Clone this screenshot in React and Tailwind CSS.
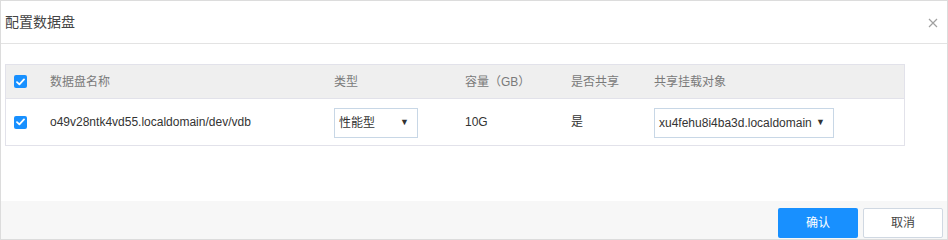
import React from "react";

const font = { fontFamily: '"Liberation Sans", "Noto Sans CJK SC", Arial, sans-serif' };

function Check() {
  return (
    <div className="w-[13px] h-[13px] rounded-[2px] bg-[#1890ff] flex items-center justify-center">
      <svg width="9" height="8" viewBox="0 0 9 8">
        <path d="M1 4.2 L3.4 6.4 L8 1.4" fill="none" stroke="#fff" strokeWidth="1.8" strokeLinecap="round" strokeLinejoin="round" />
      </svg>
    </div>
  );
}

function Select({ value, width }) {
  return (
    <div className={`h-[30px] border border-[#c8d7e6] bg-white flex items-center justify-between pl-[4px] pr-[8px] text-[12px] text-[#333] ${width}`}>
      <span>{value}</span>
      <span className="text-[9px] text-[#333]">▼</span>
    </div>
  );
}

export default function App() {
  const cols = "grid grid-cols-[44px_284px_131px_106px_83px_1fr] items-center";
  return (
    <div className="w-[948px] h-[240px] border border-[#dcdcdc] bg-white flex flex-col" style={font}>
      <div className="h-[43px] border-b border-[#e3e3e3] flex items-center justify-between pl-[4px] pr-[9px]">
        <span className="text-[14px] text-[#444]">配置数据盘</span>
        <svg width="10" height="10" viewBox="0 0 10 10" className="mt-[2px]">
          <path d="M1 1 L9 9 M9 1 L1 9" stroke="#a0a0a0" strokeWidth="1.2" />
        </svg>
      </div>
      <div className="h-[157px] pt-[20px] pl-[4px]">
        <div className="w-[900px] border border-[#e2e2ea] text-[12px]">
          <div className={`${cols} h-[34px] bg-[#efefef] border-b border-[#e2e2ea] text-[#7a7a7a]`}>
            <div className="pl-[8px]"><Check /></div>
            <div>数据盘名称</div>
            <div>类型</div>
            <div>容量（GB）</div>
            <div>是否共享</div>
            <div>共享挂载对象</div>
          </div>
          <div className={`${cols} h-[46px] text-[#333]`}>
            <div className="pl-[8px]"><Check /></div>
            <div>o49v28ntk4vd55.localdomain/dev/vdb</div>
            <div className="pt-[2px]"><Select value="性能型" width="w-[84px]" /></div>
            <div>10G</div>
            <div>是</div>
            <div className="pt-[2px]"><Select value="xu4fehu8i4ba3d.localdomain" width="w-[180px]" /></div>
          </div>
        </div>
      </div>
      <div className="h-[38px] bg-[#f7f7f7] flex justify-end items-start pt-[7px] pr-[4px] gap-[5px]">
        <button className="w-[80px] h-[30px] bg-[#1890ff] text-white text-[12px] rounded-[2px]">确认</button>
        <button className="w-[80px] h-[30px] bg-white border border-[#d0d8e2] text-[#444] text-[12px] rounded-[2px]">取消</button>
      </div>
    </div>
  );
}
